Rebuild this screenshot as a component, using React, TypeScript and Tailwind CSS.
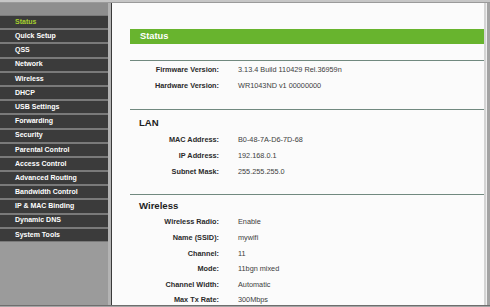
import React from "react";

const menu = [
  "Status",
  "Quick Setup",
  "QSS",
  "Network",
  "Wireless",
  "DHCP",
  "USB Settings",
  "Forwarding",
  "Security",
  "Parental Control",
  "Access Control",
  "Advanced Routing",
  "Bandwidth Control",
  "IP & MAC Binding",
  "Dynamic DNS",
  "System Tools",
];

function Row({ label, value, tight }: { label: string; value: string; tight?: boolean }) {
  return (
    <div className={`flex items-center ${tight ? "h-[15.6px]" : "h-[16px]"}`}>
      <div className="w-[89px] text-right font-bold text-[#2a2a2a] text-[7.3px]">{label}</div>
      <div className="pl-[19px] text-[#404040] text-[7.3px]">{value}</div>
    </div>
  );
}

function Line() {
  return <div className="h-px bg-[#71897f]" />;
}

export default function App() {
  return (
    <div
      className="w-[490px] h-[307px] overflow-hidden bg-[#bdbdbd] flex flex-col"
      style={{ fontFamily: '"Liberation Sans", Arial, sans-serif' }}
    >
      <div className="h-[3px] bg-[#c6c6c6] border-b border-[#9a9a9a] shrink-0" />
      <div className="flex flex-1 min-h-0">
        {/* sidebar */}
        <div className="w-[108px] bg-[#9b9b9b] flex flex-col shrink-0">
          <div className="h-[12px] bg-[#8e8e8e]" />
          <div className="flex flex-col bg-[#7a7a7a] gap-[2px] pt-[1px] pb-[1px]">
            {menu.map((m, i) => (
              <div
                key={m}
                className={`h-[12.2px] bg-[#3b3b3b] flex items-center pl-[15px] font-bold text-[7px] ${
                  i === 0 ? "text-[#a6cf2e]" : "text-white"
                }`}
              >
                {m}
              </div>
            ))}
          </div>
        </div>
        <div className="w-[3px] bg-[#b3b3b3] shrink-0" />
        <div className="w-px bg-[#3a3a3a] shrink-0" />
        {/* content */}
        <div className="w-[372px] bg-[#fbfbfb] pl-[18px] shrink-0">
          <div className="mt-[26px] h-[15px] bg-[#68b42e] flex items-center pl-[10px] text-white font-bold text-[9.3px]">
            Status
          </div>
          <div className="mt-[16px]">
            <Line />
          </div>
          <div className="mt-px">
            <Row label="Firmware Version:" value="3.13.4 Build 110429 Rel.36959n" />
            <Row label="Hardware Version:" value="WR1043ND v1 00000000" />
          </div>
          <div className="mt-[15px]">
            <Line />
          </div>
          <div className="mt-[5px] h-[16px] flex items-center pl-[9px] font-bold text-[9.6px] text-[#1e1e1e]">
            LAN
          </div>
          <div className="mt-px">
            <Row label="MAC Address:" value="B0-48-7A-D6-7D-68" />
            <Row label="IP Address:" value="192.168.0.1" />
            <Row label="Subnet Mask:" value="255.255.255.0" />
          </div>
          <div className="mt-[14px]">
            <Line />
          </div>
          <div className="mt-[3px] h-[16px] flex items-center pl-[9px] font-bold text-[9.6px] text-[#1e1e1e]">
            Wireless
          </div>
          <div className="mt-px">
            <Row tight label="Wireless Radio:" value="Enable" />
            <Row tight label="Name (SSID):" value="mywifi" />
            <Row tight label="Channel:" value="11" />
            <Row tight label="Mode:" value="11bgn mixed" />
            <Row tight label="Channel Width:" value="Automatic" />
            <Row tight label="Max Tx Rate:" value="300Mbps" />
          </div>
        </div>
        <div className="w-[2px] bg-[#d4d4d4] shrink-0" />
        <div className="w-px bg-[#efefef] shrink-0" />
        <div className="flex-1 bg-[#a3a3a3]" />
      </div>
      <div className="h-[2px] bg-[#a5a5a5] border-t border-[#6e6e6e] shrink-0" />
    </div>
  );
}
